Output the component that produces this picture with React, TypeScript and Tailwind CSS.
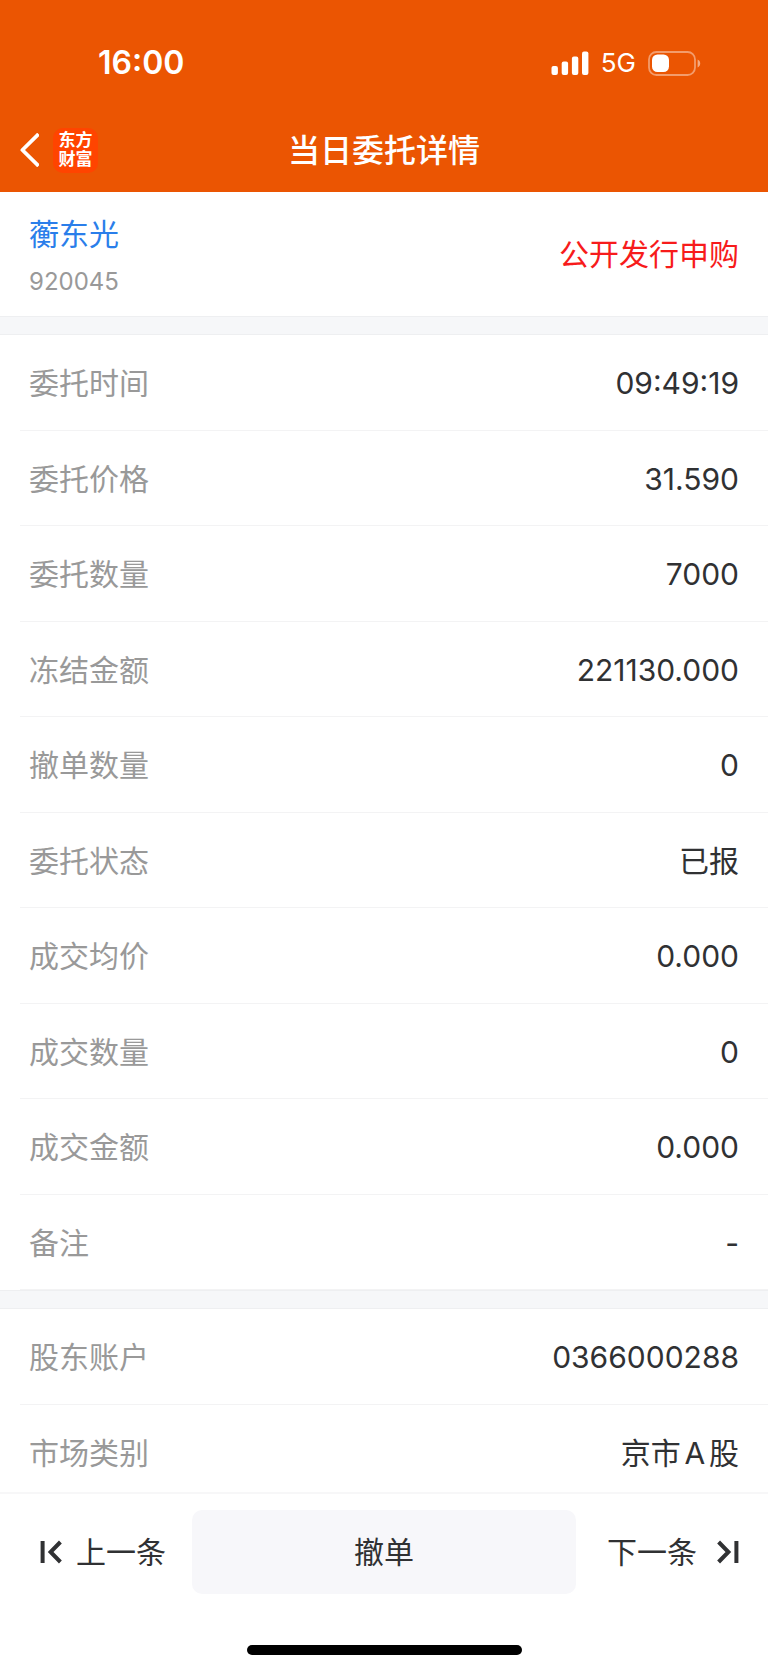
import React from 'react';

const orderRows = [
    { label: "委托时间", value: "09:49:19" },
    { label: "委托价格", value: "31.590" },
    { label: "委托数量", value: "7000" },
    { label: "冻结金额", value: "221130.000" },
    { label: "撤单数量", value: "0" },
    { label: "委托状态", value: "已报" },
    { label: "成交均价", value: "0.000" },
    { label: "成交数量", value: "0" },
    { label: "成交金额", value: "0.000" },
    { label: "备注", value: "-" },
];

const accountRows = [
    { label: "股东账户", value: "0366000288" },
    { label: "市场类别", value: "京市A股" },
];

function SignalIcon() {
    return (
        <svg width="38" height="24" viewBox="0 0 38 24" fill="#fff" aria-hidden="true">
            <rect x="0.5" y="15" width="6.4" height="9" rx="2" />
            <rect x="10.7" y="10.5" width="6.4" height="13.5" rx="2" />
            <rect x="20.9" y="5.5" width="6.4" height="18.5" rx="2" />
            <rect x="31" y="0.5" width="6.4" height="23.5" rx="2" />
        </svg>
    )
}

function BatteryIcon() {
    return (
        <svg width="53" height="25" viewBox="0 0 53 25" aria-hidden="true">
            <rect x="1" y="1" width="46" height="23" rx="7.5" fill="none" stroke="#fff" strokeOpacity="0.42" strokeWidth="1.8" />
            <rect x="4" y="3.5" width="17" height="17.5" rx="5.5" fill="#fff" />
            <path d="M49.6 8.6c1.7.8 2.6 2.2 2.6 3.9s-.9 3.1-2.6 3.9z" fill="#fff" fillOpacity="0.5" />
        </svg>
    )
}

function BackIcon() {
    return (
        <svg width="19" height="34" viewBox="0 0 19 34" fill="none" stroke="#fff" strokeWidth="3.8" aria-hidden="true">
            <path d="M17.2 2.4 2.4 17l14.8 14.6" strokeLinecap="square" strokeLinejoin="round" />
        </svg>
    )
}

function PrevIcon() {
    return (
        <svg width="22" height="24" viewBox="0 0 22 24" fill="none" stroke="#303133" strokeWidth="4" aria-hidden="true">
            <path d="M2.6 1v22M20.4 2 10.6 12l9.8 10" />
        </svg>
    )
}

function NextIcon() {
    return (
        <svg width="22" height="24" viewBox="0 0 22 24" fill="none" stroke="#303133" strokeWidth="4" aria-hidden="true">
            <path d="M19.4 1v22M1.6 2l9.8 10-9.8 10" />
        </svg>
    )
}

function Divider() {
    return <div className="h-[19px] shrink-0 border-y border-[#eeeff1] bg-[#f6f7f9]"></div>
}

function Rows({ rows }: { rows: { label: string; value: string }[] }) {
    return (
        <dl className="pl-5">
            {rows.map((row) => (
                <div key={row.label} className="flex h-24 items-center justify-between border-b border-[#f3f3f4] pt-px pr-[29px] pl-[9px] even:h-[95px]">
                    <dt className="text-[#999]">{row.label}</dt>
                    <dd className="text-[#303133] [text-autospace:normal]">{row.value}</dd>
                </div>
            ))}
        </dl>
    )
}

export default function App() {
    return (
        <div className="flex h-screen w-full flex-col bg-white font-[Inter,'Noto_Sans_CJK_SC',sans-serif] text-[30px] leading-10">
            <header className="shrink-0 bg-[#eb5502] text-white">
                <div className="flex h-[108px] items-center justify-between pt-[18px] pr-[67px] pl-[98px]">
                    <span className="text-[32px] font-semibold">16:00</span>
                    <div className="flex items-center gap-3">
                        <SignalIcon />
                        <span className="text-[26px]">5G</span>
                        <BatteryIcon />
                    </div>
                </div>
                <div className="grid h-[84px] grid-cols-[1fr_auto_1fr] items-center">
                    <div className="flex items-center gap-[14px] pl-5">
                        <button type="button" aria-label="返回">
                            <BackIcon />
                        </button>
                        <div className="grid h-[45px] w-[45px] place-content-center rounded-[10px] bg-[#ff4400] text-center text-[17px] leading-[19px] font-bold">
                            <span>东方</span>
                            <span>财富</span>
                        </div>
                    </div>
                    <h1 className="pt-0.5 text-[32px] font-medium">当日委托详情</h1>
                </div>
            </header>

            <main className="min-h-0 flex-1 overflow-y-auto [scrollbar-width:none]">
                <section className="flex h-[124px] items-center justify-between px-[29px]">
                    <div className="pt-2">
                        <a href="#" className="block text-[#2a7eea]">蘅东光</a>
                        <p className="mt-2 text-2xl leading-10 text-[#999]">920045</p>
                    </div>
                    <span className="text-[#f71b1b]">公开发行申购</span>
                </section>
                <Divider />
                <Rows rows={orderRows} />
                <Divider />
                <Rows rows={accountRows} />
            </main>

            <footer className="shrink-0 border-t-2 border-[#f7f7f8] bg-white text-[#303133]">
                <div className="grid grid-cols-[1fr_2fr_1fr] pt-4">
                    <button type="button" className="flex items-center gap-[14px] pl-10">
                        <PrevIcon />
                        上一条
                    </button>
                    <button type="button" className="h-[84px] rounded-[10px] bg-[#f7f7fa]">撤单</button>
                    <button type="button" className="flex items-center justify-end gap-5 pr-[29px]">
                        下一条
                        <NextIcon />
                    </button>
                </div>
                <div className="mx-auto mt-[51px] mb-[15px] h-[10px] w-[275px] rounded-full bg-black"></div>
            </footer>
        </div>
    )
}
